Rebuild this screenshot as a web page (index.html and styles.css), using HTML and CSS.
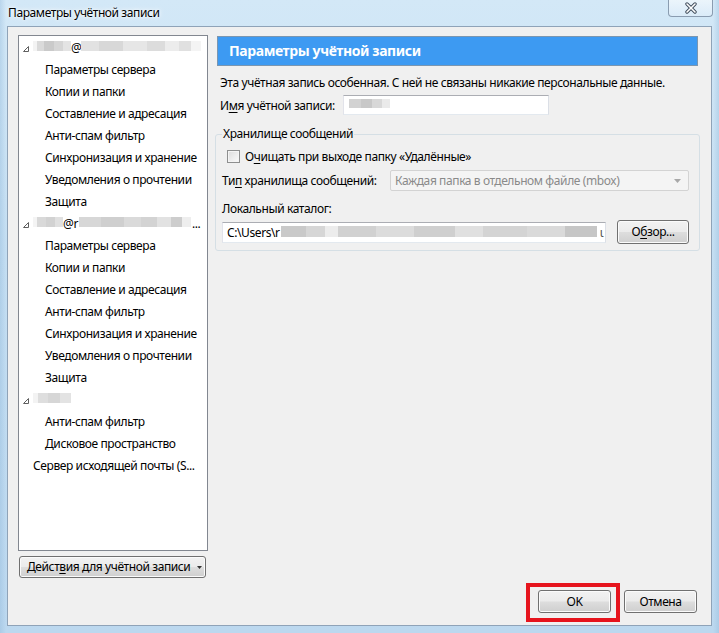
FILE: index.html
```html
<!DOCTYPE html>
<html lang="ru">
<head>
<meta charset="utf-8">
<title>Параметры учётной записи</title>
<link rel="stylesheet" href="styles.css">
</head>
<body>
<div class="window">
  <div class="titlebar">
    <span class="title">Параметры учётной записи</span>
    <span class="close">
      <svg width="14" height="12" viewBox="0 0 14 12"><path d="M3 2 L11 10 M11 2 L3 10" stroke="#3d4a5a" stroke-width="3.4" stroke-linecap="round" fill="none"/><path d="M3 2 L11 10 M11 2 L3 10" stroke="#ffffff" stroke-width="1.6" stroke-linecap="round" fill="none"/></svg>
    </span>
  </div>
  <div class="client">
    <div class="main">
      <div class="left">
        <ul class="tree">
          <li class="acct"><svg class="twisty" width="6" height="6" viewBox="0 0 6 6"><path d="M5.5 0.5 L5.5 5.5 L0.5 5.5 Z" fill="#fff" stroke="#5f5f5f" stroke-width="1"/></svg><span class="blur b1"></span><span class="at">@</span><span class="blur b2"></span></li>
          <li class="child">Параметры сервера</li>
          <li class="child">Копии и папки</li>
          <li class="child">Составление и адресация</li>
          <li class="child">Анти-спам фильтр</li>
          <li class="child">Синхронизация и хранение</li>
          <li class="child">Уведомления о прочтении</li>
          <li class="child">Защита</li>
          <li class="acct"><svg class="twisty" width="6" height="6" viewBox="0 0 6 6"><path d="M5.5 0.5 L5.5 5.5 L0.5 5.5 Z" fill="#fff" stroke="#5f5f5f" stroke-width="1"/></svg><span class="blur b3"></span><span class="at">@r</span><span class="blur b4"></span><span class="dots">...</span></li>
          <li class="child">Параметры сервера</li>
          <li class="child">Копии и папки</li>
          <li class="child">Составление и адресация</li>
          <li class="child">Анти-спам фильтр</li>
          <li class="child">Синхронизация и хранение</li>
          <li class="child">Уведомления о прочтении</li>
          <li class="child">Защита</li>
          <li class="acct"><svg class="twisty" width="6" height="6" viewBox="0 0 6 6"><path d="M5.5 0.5 L5.5 5.5 L0.5 5.5 Z" fill="#fff" stroke="#5f5f5f" stroke-width="1"/></svg><span class="blur b5"></span></li>
          <li class="child">Анти-спам фильтр</li>
          <li class="child">Дисковое пространство</li>
          <li class="server">Сервер исходящей почты (S...</li>
        </ul>
        <button class="btn actions"><span class="btn-label">Дейст<u>в</u>ия для учётной записи</span><svg class="dd" width="5" height="3" viewBox="0 0 5 3"><path d="M0 0 H5 L2.5 3 Z" fill="#333"/></svg></button>
      </div>
      <div class="right">
        <div class="header">Параметры учётной записи</div>
        <p class="note">Эта учётная запись особенная. С ней не связаны никакие персональные данные.</p>
        <div class="name-row">
          <span class="name-label">И<u>м</u>я учётной записи:</span>
          <span class="textbox name-input"><span class="blur b-name"></span></span>
        </div>
        <fieldset class="store">
          <legend>Хранилище сообщений</legend>
          <div class="check-row"><span class="checkbox"></span><span>О<u>ч</u>ищать при выходе папку «Удалённые»</span></div>
          <div class="type-row">
            <span>Ти<u>п</u> хранилища сообщений:</span>
            <span class="select"><span>Каждая папка в отдельном файле (mbox)</span><svg class="sel-arrow" width="7" height="4" viewBox="0 0 7 4"><path d="M0 0 H7 L3.5 4 Z" fill="#a8a8a8"/></svg></span>
          </div>
          <div class="local-label">Локальный каталог:</div>
          <div class="path-row">
            <span class="textbox path-input"><span>C:\Users\r</span><span class="blur b-path"></span><span class="tail">ι</span></span>
            <button class="btn browse"><span class="btn-label">О<u>б</u>зор...</span></button>
          </div>
        </fieldset>
      </div>
    </div>
    <div class="footer">
      <span class="ok-wrap"><button class="btn ok"><span class="btn-label">OK</span></button></span>
      <button class="btn cancel"><span class="btn-label">Отмена</span></button>
    </div>
  </div>
</div>
</body>
</html>
```

FILE: styles.css
```css
* { box-sizing: border-box; }

html, body {
  margin: 0;
  padding: 0;
}

body {
  width: 719px;
  height: 633px;
  overflow: hidden;
  font-family: "Noto Sans", "Liberation Sans", sans-serif;
  font-size: 12px;
  letter-spacing: -0.4px;
  color: #000;
  background:
    linear-gradient(90deg, rgba(140,180,215,0.35) 0, rgba(255,255,255,0) 6px, rgba(255,255,255,0) 713px, rgba(140,180,215,0.35) 719px),
    linear-gradient(180deg, #d3e8f7 0%, #c4def2 40%, #bcd8ef 100%);
}

.window {
  width: 719px;
  height: 633px;
  display: flex;
  flex-direction: column;
}

.titlebar {
  height: 26px;
  display: flex;
  align-items: flex-start;
  justify-content: space-between;
  padding-left: 8px;
  flex: none;
}

.title {
  line-height: 16px;
  margin-top: 5px;
  font-size: 12px;
  text-shadow: 0 0 6px #fff, 0 0 3px #fff;
}

.close {
  width: 45px;
  height: 17px;
  margin-right: 6px;
  border: 1px solid #8a9cb0;
  border-top: none;
  border-radius: 0 0 4px 4px;
  background: linear-gradient(180deg, rgba(255,255,255,0.55), rgba(225,238,250,0.6));
  display: flex;
  align-items: center;
  justify-content: center;
}

.client {
  margin: 0 7px 7px 7px;
  height: 600px;
  border: 1px solid #8fa3b8;
  background: #f0f0f0;
  padding: 8px 11px 12px 10px;
  display: flex;
  flex-direction: column;
}

.main {
  display: flex;
  height: 543px;
  flex: none;
}

.left {
  width: 190px;
  flex: none;
  display: flex;
  flex-direction: column;
}

.tree {
  list-style: none;
  margin: 0;
  padding: 1px 0 0 0;
  height: 516px;
  border: 1px solid #828790;
  background: #fff;
  overflow: hidden;
}

.tree li {
  height: 22px;
  display: flex;
  align-items: center;
  white-space: nowrap;
  line-height: 16px;
}

.tree .child { padding-left: 26px; }
.tree .server { padding-left: 14px; }
.tree .acct { padding-left: 4px; }

.twisty {
  margin-right: 4px;
  margin-top: 2px;
  flex: none;
}

.blur {
  display: inline-block;
  height: 10px;
  flex: none;
}

.tree .blur { margin-bottom: 4px; }

.b1 {
  width: 38px;
  background: linear-gradient(90deg, #f3f3f3 0 10%, #dadada 10% 30%, #cacaca 30% 55%, #d6d6d6 55% 80%, #e4e4e4 80% 100%);
}
.b2 {
  width: 120px;
  background: linear-gradient(90deg, #e2e2e2 0 15%, #d8d8d8 15% 35%, #e6e6e6 35% 55%, #dcdcdc 55% 70%, #ececec 70% 82%, #e0e0e0 82% 92%, #f4f4f4 92% 100%);
}
.b3 {
  width: 30px;
  background: linear-gradient(90deg, #f4f4f4 0 15%, #d9d9d9 15% 45%, #d2d2d2 45% 75%, #e0e0e0 75% 100%);
}
.b4 {
  width: 112px;
  margin-left: 1px;
  background: linear-gradient(90deg, #d7d7d7 0 20%, #cfcfcf 20% 40%, #dadada 40% 55%, #d3d3d3 55% 70%, #e2e2e2 70% 82%, #cdcdcd 82% 92%, #eeeeee 92% 100%);
}
.b5 {
  width: 38px;
  background: linear-gradient(90deg, #f3f3f3 0 12%, #dedede 12% 40%, #d6d6d6 40% 70%, #e3e3e3 70% 100%);
}

.at { flex: none; }
.dots { margin-left: 1px; }

.btn {
  font-family: "Noto Sans", "Liberation Sans", sans-serif;
  font-size: 12px;
  letter-spacing: -0.4px;
  color: #000;
  border: 1px solid #707070;
  border-radius: 3px;
  background: linear-gradient(180deg, #f2f2f2 0%, #ebebeb 48%, #dddddd 52%, #cfcfcf 100%);
  box-shadow: inset 0 0 0 1px #fbfbfb;
  padding: 0;
  line-height: 16px;
  display: flex;
  align-items: center;
  justify-content: center;
  white-space: nowrap;
}

.btn-label { white-space: nowrap; }

u { text-decoration: underline; text-underline-offset: 2px; }

.actions {
  margin-top: 5px;
  margin-left: 1px;
  width: 187px;
  height: 22px;
  justify-content: flex-start;
  padding-left: 7px;
}

.actions .dd { margin-left: 7px; margin-top: 1px; flex: none; }

.right {
  flex: 1;
  min-width: 0;
  margin-left: 7px;
  display: flex;
  flex-direction: column;
}

.header {
  margin: 1px 2px 0 2px;
  height: 30px;
  background: #3d9af2;
  border: 1px solid #7b96b0;
  color: #fff;
  font-weight: bold;
  font-size: 14px;
  line-height: 28px;
  padding-left: 11px;
  white-space: nowrap;
}

.note {
  margin: 9px 0 0 5px;
  line-height: 16px;
  white-space: nowrap;
}

.name-row {
  margin: 4px 0 0 5px;
  height: 20px;
  display: flex;
  align-items: center;
}

.name-label { width: 123px; flex: none; }

.textbox {
  display: flex;
  align-items: center;
  background: #fff;
  border: 1px solid;
  border-color: #abadb3 #dbdfe6 #e3e9ef #e2e3ea;
  white-space: nowrap;
  overflow: hidden;
}

.name-input {
  width: 206px;
  height: 20px;
  padding-left: 5px;
}

.b-name {
  width: 41px;
  height: 9px;
  margin-bottom: 3px;
  background: linear-gradient(90deg, #d2d2d2 0 30%, #c8c8c8 30% 55%, #d8d8d8 55% 80%, #eaeaea 80% 100%);
}

.store {
  margin: 11px 0 0 0;
  padding: 0 10px 6px 6px;
  border: 1px solid #d5dfe5;
  border-radius: 3px;
  min-width: 0;
}

.store legend {
  padding: 0 1px;
  line-height: 16px;
  margin-left: 0;
}

.check-row {
  margin-top: 4px;
  height: 20px;
  display: flex;
  align-items: center;
}

.checkbox {
  width: 13px;
  height: 13px;
  margin-left: 5px;
  margin-right: 5px;
  border: 1px solid #8e8f8f;
  background: linear-gradient(135deg, #dcdcdc, #fbfbfb);
  box-shadow: inset 0 0 0 1px #f4f4f4;
  flex: none;
}

.type-row {
  margin-top: 4px;
  height: 21px;
  display: flex;
  align-items: center;
  white-space: nowrap;
}

.select {
  margin-left: auto;
  width: 299px;
  height: 21px;
  border: 1px solid #d3d3d3;
  border-radius: 2px;
  background: #f4f4f4;
  color: #8a8a8a;
  display: flex;
  align-items: center;
  padding-left: 4px;
  padding-right: 7px;
  white-space: nowrap;
  flex: none;
}

.sel-arrow { margin-left: auto; flex: none; }

.local-label {
  margin-top: 10px;
  line-height: 16px;
}

.path-row {
  margin-top: 3px;
  height: 24px;
  display: flex;
  align-items: center;
}

.path-input {
  flex: 1;
  min-width: 0;
  height: 21px;
  padding-left: 4px;
}

.b-path {
  width: 316px;
  height: 11px;
  margin-left: 1px;
  margin-bottom: 1px;
  background: linear-gradient(90deg, #c9c9c9 0 8%, #d6d6d6 8% 14%, #ececec 14% 18%, #d1d1d1 18% 30%, #dcdcdc 30% 42%, #cfcfcf 42% 55%, #e0e0e0 55% 64%, #d4d4d4 64% 78%, #dadada 78% 90%, #c6c6c6 90% 100%);
}

.tail { margin-left: 3px; color: #555; }

.browse {
  margin-left: 11px;
  width: 72px;
  height: 24px;
  flex: none;
}

.footer {
  margin-top: 12px;
  height: 23px;
  display: flex;
  justify-content: flex-end;
  padding-right: 3px;
  flex: none;
}

.ok-wrap {
  position: relative;
  display: block;
}

.ok-wrap::after {
  content: "";
  position: absolute;
  top: -7px;
  right: -9px;
  bottom: -9px;
  left: -12px;
  border: 4px solid #e6141d;
  pointer-events: none;
}

.ok, .cancel {
  width: 73px;
  height: 23px;
}

.cancel { margin-left: 13px; }
```
